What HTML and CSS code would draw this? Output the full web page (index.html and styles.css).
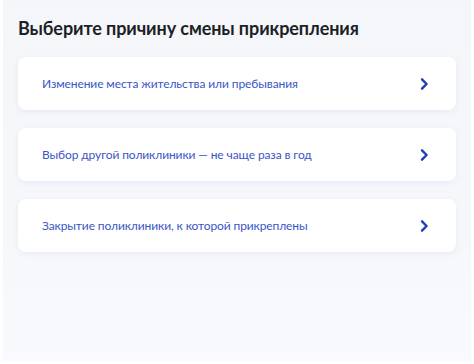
FILE: index.html
```html
<!DOCTYPE html>
<html lang="ru">
<head>
<meta charset="utf-8">
<link rel="stylesheet" href="styles.css">
</head>
<body>
<main class="page">
  <h1 class="title">Выберите причину смены прикрепления</h1>
  <div class="list">
    <a class="card" href="#">
      <span class="card-text">Изменение места жительства или пребывания</span>
      <svg class="chev" width="10" height="14" viewBox="0 0 10 14"><path d="M3 2.3 L7.6 7 L3 11.7" fill="none" stroke="#1f3fb3" stroke-width="2.4" stroke-linecap="round" stroke-linejoin="round"/></svg>
    </a>
    <a class="card" href="#">
      <span class="card-text">Выбор другой поликлиники — не чаще раза в год</span>
      <svg class="chev" width="10" height="14" viewBox="0 0 10 14"><path d="M3 2.3 L7.6 7 L3 11.7" fill="none" stroke="#1f3fb3" stroke-width="2.4" stroke-linecap="round" stroke-linejoin="round"/></svg>
    </a>
    <a class="card" href="#">
      <span class="card-text">Закрытие поликлиники, к которой прикреплены</span>
      <svg class="chev" width="10" height="14" viewBox="0 0 10 14"><path d="M3 2.3 L7.6 7 L3 11.7" fill="none" stroke="#1f3fb3" stroke-width="2.4" stroke-linecap="round" stroke-linejoin="round"/></svg>
    </a>
  </div>
</main>
</body>
</html>
```

FILE: styles.css
```css
html, body {
  margin: 0;
  padding: 0;
  background: #ffffff;
}
body {
  font-family: Lato, "Noto Sans", sans-serif;
  width: 474px;
  height: 364px;
  overflow: hidden;
}
.page {
  margin: 0 3px;
  height: 361px;
  box-sizing: border-box;
  padding: 14px 15px 0 15px;
  background: linear-gradient(#f4f6fa, #f5f7fb 60%, #f9fafd);
}
.title {
  margin: 0;
  font-size: 18px;
  line-height: 28px;
  font-weight: 700;
  color: #1c1f26;
  letter-spacing: -0.1px;
}
.list {
  margin-top: 15px;
  display: flex;
  flex-direction: column;
  gap: 18px;
}
.card {
  display: flex;
  align-items: center;
  justify-content: space-between;
  height: 53px;
  box-sizing: border-box;
  padding: 0 27px 0 24px;
  background: #ffffff;
  border-radius: 8px;
  box-shadow: 0 2px 6px rgba(80, 100, 150, 0.08);
  text-decoration: none;
}
.card-text {
  font-size: 12px;
  letter-spacing: -0.1px;
  color: #3a55c5;
}
.chev {
  display: block;
}
```
